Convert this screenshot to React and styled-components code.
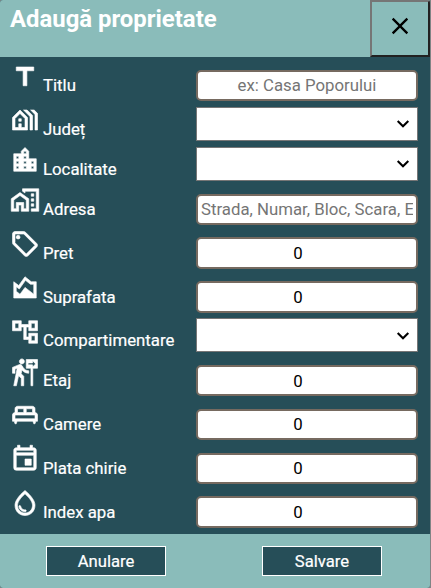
import React from "react";
import styled, { createGlobalStyle, css } from "styled-components";
import {
  MdTitle, MdOutlineHolidayVillage, MdLocationCity, MdOutlineHomeWork, MdOutlineLocalOffer,
  MdOutlineAreaChart, MdOutlineAccountTree, MdFollowTheSigns, MdOutlineKingBed,
  MdOutlineInsertInvitation, MdOutlineWaterDrop, MdClose,
} from "react-icons/md";

const GlobalStyle = createGlobalStyle`
  *, *::before, *::after { box-sizing: border-box; }
  body { margin: 0; background: #808485; font-family: Roboto, sans-serif; }
  input, select, button { font-family: inherit; }
`;

const Dialog = styled.form`
  width: 430px;
  height: 588px;
  display: flex;
  flex-direction: column;
  overflow: hidden;
  border-radius: 3px;
  background: #264e58;
`;

const Header = styled.header`
  height: 57px;
  flex: none;
  display: flex;
  justify-content: space-between;
  background: #8abcba;
`;

const Title = styled.h1`
  margin: 5px 0 0 10px;
  font-size: 23.9px;
  line-height: 28px;
  font-weight: 700;
  color: #fff;
`;

const CloseButton = styled.button`
  width: 60px;
  height: 57px;
  padding: 0 0 5px;
  display: flex;
  align-items: center;
  justify-content: center;
  border: 2px solid;
  border-color: #767676 #212121 #212121 #767676;
  background: transparent;
  color: #000;
  font-size: 28px;
`;

const Fields = styled.div`
  flex: 1;
  padding-top: 6.2px;
`;

const Row = styled.div`
  display: grid;
  grid-template-columns: 196px 222px;
  height: ${(p) => (p.$select ? "40px" : "43.8px")};
`;

const Label = styled.label`
  display: flex;
  padding-left: 9.5px;
  color: #fff;
  font-size: 16.8px;
  line-height: 22px;

  svg {
    flex: none;
    width: 30px;
    height: 30px;
    margin-top: -1.7px;
    stroke-width: 0.5px;
  }

  svg [fill="none"] {
    stroke: none;
  }

  span {
    margin: 11px 0 0 3.5px;
    white-space: nowrap;
    -webkit-text-stroke: 0.2px #fff;
  }
`;

const control = css`
  width: 222px;
  margin: 0;
  background: #fff;
  font-size: 16.8px;
`;

const Input = styled.input`
  ${control}
  height: 31.4px;
  margin-top: 6.6px;
  padding: 0 ${(p) => (p.$numeric ? "6px" : "3px")} 0 3px;
  border: 2px solid #766a60;
  border-radius: 5px;
  text-align: center;
  color: #000;

  &::placeholder { color: #757575; opacity: 1; }
`;

const SelectBox = styled.div`
  display: grid;
  align-items: center;
  height: 34px;
`;

const Select = styled.select`
  ${control}
  grid-area: 1 / 1;
  height: 34px;
  appearance: none;
  border: 1px solid #767676;
  border-radius: 0;
`;

const Chevron = styled.svg`
  grid-area: 1 / 1;
  justify-self: end;
  width: 14px;
  height: 9px;
  margin-right: 8px;
  pointer-events: none;
  fill: none;
  stroke: #000;
  stroke-width: 2.1;
`;

const Footer = styled.footer`
  height: 54px;
  flex: none;
  display: flex;
  align-items: center;
  gap: 96px;
  padding-left: 46px;
  background: #8abcba;
`;

const Action = styled.button`
  width: 120px;
  height: 30px;
  padding: 0;
  border: 1px solid #fff;
  background: #264e58;
  color: #fff;
  font-size: 16.67px;
  -webkit-text-stroke: 0.2px #fff;
`;

const fields = [
  { id: "titlu", label: "Titlu", icon: MdTitle, placeholder: "ex: Casa Poporului" },
  { id: "judet", label: "Județ", icon: MdOutlineHolidayVillage, select: true },
  { id: "localitate", label: "Localitate", icon: MdLocationCity, select: true },
  { id: "adresa", label: "Adresa", icon: MdOutlineHomeWork, placeholder: "Strada, Numar, Bloc, Scara, Etaj" },
  { id: "pret", label: "Pret", icon: MdOutlineLocalOffer, value: "0" },
  { id: "suprafata", label: "Suprafata", icon: MdOutlineAreaChart, value: "0" },
  { id: "compartimentare", label: "Compartimentare", icon: MdOutlineAccountTree, select: true },
  { id: "etaj", label: "Etaj", icon: MdFollowTheSigns, value: "0" },
  { id: "camere", label: "Camere", icon: MdOutlineKingBed, value: "0" },
  { id: "chirie", label: "Plata chirie", icon: MdOutlineInsertInvitation, value: "0" },
  { id: "apa", label: "Index apa", icon: MdOutlineWaterDrop, value: "0" },
];

export default function App() {
  return (
    <>
      <GlobalStyle />
      <Dialog>
        <Header>
          <Title>Adaugă proprietate</Title>
          <CloseButton type="button" aria-label="Închide"><MdClose /></CloseButton>
        </Header>
        <Fields>
          {fields.map(({ id, label, icon: Icon, select, placeholder, value }) => (
            <Row key={id} $select={select}>
              <Label htmlFor={id}><Icon /><span>{label}</span></Label>
              {select ? (
                <SelectBox>
                  <Select id={id} />
                  <Chevron viewBox="0 0 14 9"><path d="M1.7 2 7 7.2 12.3 2" /></Chevron>
                </SelectBox>
              ) : (
                <Input
                  id={id}
                  type={value ? "number" : "text"}
                  $numeric={!!value}
                  placeholder={placeholder}
                  defaultValue={value}
                />
              )}
            </Row>
          ))}
        </Fields>
        <Footer>
          <Action type="button">Anulare</Action>
          <Action type="button">Salvare</Action>
        </Footer>
      </Dialog>
    </>
  );
}
